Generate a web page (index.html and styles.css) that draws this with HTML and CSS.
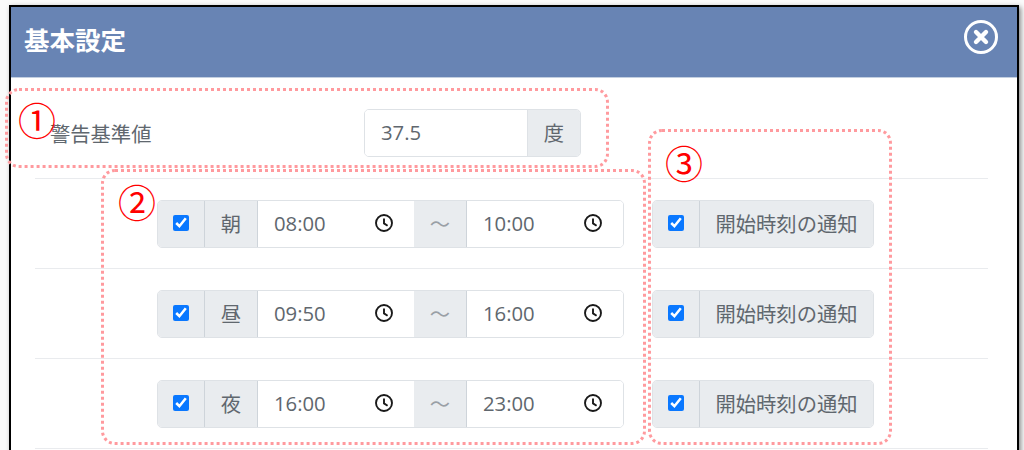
FILE: index.html
```html
<!DOCTYPE html>
<html lang="ja">
<head>
    <meta charset="UTF-8">
    <title>基本設定</title>
    <link rel="stylesheet" href="styles.css">
</head>
<body>
    <div class="page">
        <div class="window">
            <div class="window-header">
                <h1>基本設定</h1>
                <svg class="close-icon" viewBox="0 0 36 36">
                    <circle cx="18" cy="18" r="15.5" fill="none" stroke="#fff" stroke-width="3"/>
                    <path d="M13 13L23 23M23 13L13 23" stroke="#fff" stroke-width="4.4" stroke-linecap="round"/>
                </svg>
            </div>
            <div class="window-body">
                <div class="row row-first">
                    <label class="row-label">警告基準値</label>
                    <div class="input-group group-threshold">
                        <div class="field">37.5</div>
                        <div class="addon addon-unit">度</div>
                    </div>
                </div>

                <div class="row row-time">
                    <div class="input-group group-time">
                        <div class="addon addon-check"><input type="checkbox" checked></div>
                        <div class="addon addon-name">朝</div>
                        <div class="field field-time">08:00
                            <svg class="clock" viewBox="0 0 18 18"><circle cx="9" cy="9" r="8"/><path d="M9 4.4V9.4L12.6 11.8"/></svg>
                        </div>
                        <div class="addon addon-name addon-tilde">～</div>
                        <div class="field field-time">10:00
                            <svg class="clock" viewBox="0 0 18 18"><circle cx="9" cy="9" r="8"/><path d="M9 4.4V9.4L12.6 11.8"/></svg>
                        </div>
                    </div>
                    <div class="input-group group-notify">
                        <div class="addon addon-check"><input type="checkbox" checked></div>
                        <div class="addon addon-notify">開始時刻の通知</div>
                    </div>
                </div>

                <div class="row row-time">
                    <div class="input-group group-time">
                        <div class="addon addon-check"><input type="checkbox" checked></div>
                        <div class="addon addon-name">昼</div>
                        <div class="field field-time">09:50
                            <svg class="clock" viewBox="0 0 18 18"><circle cx="9" cy="9" r="8"/><path d="M9 4.4V9.4L12.6 11.8"/></svg>
                        </div>
                        <div class="addon addon-name addon-tilde">～</div>
                        <div class="field field-time">16:00
                            <svg class="clock" viewBox="0 0 18 18"><circle cx="9" cy="9" r="8"/><path d="M9 4.4V9.4L12.6 11.8"/></svg>
                        </div>
                    </div>
                    <div class="input-group group-notify">
                        <div class="addon addon-check"><input type="checkbox" checked></div>
                        <div class="addon addon-notify">開始時刻の通知</div>
                    </div>
                </div>

                <div class="row row-time">
                    <div class="input-group group-time">
                        <div class="addon addon-check"><input type="checkbox" checked></div>
                        <div class="addon addon-name">夜</div>
                        <div class="field field-time">16:00
                            <svg class="clock" viewBox="0 0 18 18"><circle cx="9" cy="9" r="8"/><path d="M9 4.4V9.4L12.6 11.8"/></svg>
                        </div>
                        <div class="addon addon-name addon-tilde">～</div>
                        <div class="field field-time">23:00
                            <svg class="clock" viewBox="0 0 18 18"><circle cx="9" cy="9" r="8"/><path d="M9 4.4V9.4L12.6 11.8"/></svg>
                        </div>
                    </div>
                    <div class="input-group group-notify">
                        <div class="addon addon-check"><input type="checkbox" checked></div>
                        <div class="addon addon-notify">開始時刻の通知</div>
                    </div>
                </div>
            </div>
        </div>

        <!-- Annotations drawn over the dialog -->
        <div class="callout callout-1"></div>
        <div class="callout callout-2"></div>
        <div class="callout callout-3"></div>
        <span class="marker marker-1">①</span>
        <span class="marker marker-2">②</span>
        <span class="marker marker-3">③</span>
    </div>
</body>
</html>
```

FILE: styles.css
```css
:root {
    --addon-bg: #e9ecef;
    --line: #dee2e6;
    --text: #60676e;
}

html, body {
    margin: 0;
    height: 450px;
    overflow: hidden;
    background: #fff;
}

body {
    font-family: "Open Sans", "Noto Sans CJK JP", sans-serif;
    color: var(--text);
}

.page {
    position: relative;
    height: 450px;
    padding: 5px 0 0 9px;
    box-sizing: border-box;
    overflow: hidden;
    background: #fafafa;
}

.window {
    width: 1010px;
    height: 500px;
    box-sizing: border-box;
    border: 2px solid #000;
    background: #fff;
    box-shadow: 2px 2px 5px rgba(0, 0, 0, 0.45);
}

.window-header {
    display: flex;
    align-items: center;
    justify-content: space-between;
    height: 71px;
    padding: 0 18px 10px 13px;
    box-sizing: border-box;
    background: #6884b4;
    border-bottom: 1px solid #c3cfe0;
}

.window-header h1 {
    margin: 3px 0 0;
    font-size: 25.5px;
    font-weight: 700;
    color: #fff;
}

.close-icon {
    width: 36px;
    height: 36px;
}

.window-body {
    padding: 0 29px 0 24px;
}

.row {
    display: flex;
    border-bottom: 1px solid #e9ebee;
}

.row-first {
    align-items: center;
    height: 101px;
    padding-top: 9px;
    box-sizing: border-box;
}

.row-label {
    width: 314px;
    padding-left: 15px;
    box-sizing: border-box;
    font-size: 20.3px;
}

.row-time {
    height: 90px;
    box-sizing: border-box;
    padding: 21px 0 0 122px;
    gap: 28px;
}

.input-group {
    display: flex;
    height: 48px;
    box-sizing: border-box;
    border: 1px solid var(--line);
    border-radius: 5px;
    font-size: 20.3px;
    overflow: hidden;
}

.group-threshold {
    width: 217px;
    margin-left: 15px;
}

.group-time {
    width: 467px;
}

.group-notify {
    width: 222px;
}

.field {
    flex: 1;
    display: flex;
    align-items: center;
    padding-left: 16px;
    padding-bottom: 2px;
    background: #fff;
}

.field-time {
    justify-content: space-between;
    padding-right: 21px;
}

.addon {
    display: flex;
    align-items: center;
    justify-content: center;
    padding-bottom: 2px;
    background: var(--addon-bg);
}

.addon-unit {
    width: 52px;
    border-left: 1px solid var(--line);
}

.addon-check {
    width: 46px;
    border-right: 1px solid #ced4da;
}

.addon-check input {
    width: 16px;
    height: 16px;
    margin: 0;
    accent-color: #0a78ff;
}

.addon-name {
    width: 52px;
    border-right: 1px solid #ced4da;
}

.addon-tilde {
    color: #9aa0a6;
}

.addon-notify {
    flex: 1;
}

.clock {
    width: 18px;
    height: 18px;
}

.clock circle,
.clock path {
    fill: none;
    stroke: #1a1a1a;
    stroke-width: 1.9;
}

.callout {
    position: absolute;
    box-sizing: border-box;
    border: 3px dotted #ff9a9e;
    border-radius: 14px;
}

.callout-1 {
    left: 5px;
    top: 88px;
    width: 604px;
    height: 80px;
}

.callout-2 {
    left: 101px;
    top: 169px;
    width: 545px;
    height: 276px;
}

.callout-3 {
    left: 648px;
    top: 129px;
    width: 244px;
    height: 316px;
}

.marker {
    position: absolute;
    font-family: "Noto Sans CJK JP", sans-serif;
    font-size: 38px;
    line-height: 36px;
    color: #ff0000;
}

.marker-1 {
    left: 18px;
    top: 101px;
}

.marker-2 {
    left: 118px;
    top: 183px;
}

.marker-3 {
    left: 665px;
    top: 144px;
}
```
